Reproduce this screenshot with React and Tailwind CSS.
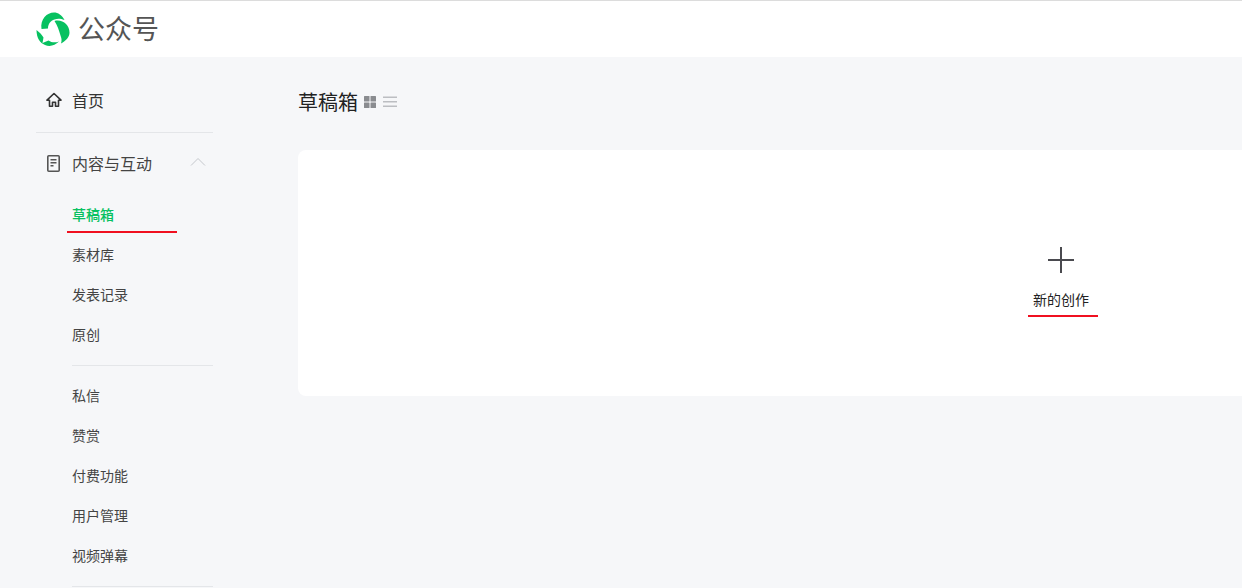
const groupOne = ["草稿箱", "素材库", "发表记录", "原创"];
const groupTwo = ["私信", "赞赏", "付费功能", "用户管理", "视频弹幕"];

function Logo() {
  return (
    <svg viewBox="0 0 34 34" className="h-[34px] w-[34px]" fill="#07c160">
      <path d="M5.500 17C4 7 11 .5 18 .5c4 0 8 2.500 10.500 7.500-4-1.500-7-1.500-10-.5-4 1.300-6.500 4.500-6.500 9z" />
      <path d="M18.500 9c8-2 15 4 15 11.500 0 4.500-3.500 8.500-8.500 11 1-3 .5-5.500-.5-8-1.500-5-3-10-6-14.500z" />
      <path d="M.5 18c0 8 3.500 13 8.500 15 5 2 10 .5 14-3.500-4 1.500-7.500 1-10.500-1l-6 2.500 1-5.500C6 23 4 20.500.5 18z" />
    </svg>
  );
}

function HomeIcon() {
  return (
    <svg viewBox="0 0 16 16" className="h-4 w-4" fill="none" stroke="#333" strokeWidth="1.6" strokeLinejoin="round">
      <path d="M8 1.500 1 8.200h2.500v6h3v-4h3v4h3v-6H15z" />
    </svg>
  );
}

function DocIcon() {
  return (
    <svg viewBox="0 0 13 17" className="h-[17px] w-[13px]" fill="none" stroke="#555" strokeWidth="1.6">
      <rect x="0.800" y="0.800" width="11.400" height="15.400" rx="1" />
      <path d="M3.500 4.800h6M3.500 7.800h6M3.500 10.800h3" />
    </svg>
  );
}

function ChevronIcon() {
  return (
    <svg viewBox="0 0 16 9" className="ml-auto mr-[7px] mb-[4px] h-[9px] w-4" fill="none" stroke="#c4c7cc" strokeWidth="1">
      <path d="M1 8.500 8 1.500l7 7" />
    </svg>
  );
}

function SubItem({ label, active }) {
  return (
    <div className={`flex h-10 items-center pb-[2px] pl-9 text-[14px] ${active ? "font-medium text-[#07c160]" : "text-[#444]"}`}>
      {label}
    </div>
  );
}

function Sidebar() {
  return (
    <aside className="ml-9 w-[177px] shrink-0 pt-[24px]">
      <div className="flex h-10 items-center pb-[2px] text-[16px] text-[#333]">
        <span className="ml-[10px] mr-[10px] flex w-4 justify-center"><HomeIcon /></span>
        首页
      </div>
      <div className="mt-[11px] border-t border-[#e4e6e9]" />
      <div className="mt-[11px] flex h-10 items-center pb-[2px] text-[16px] text-[#444]">
        <span className="ml-[10px] mr-[11px] flex w-[15px] justify-center"><DocIcon /></span>
        内容与互动
        <ChevronIcon />
      </div>
      <div className="relative mt-[11px]">
        {groupOne.map((label, i) => (
          <SubItem key={label} label={label} active={i === 0} />
        ))}
        <div className="absolute left-[31px] top-[36px] h-[2px] w-[110px] bg-[#f01020]" />
      </div>
      <div className="ml-9 mt-[10px] border-t border-[#e4e6e9]" />
      <div className="mt-[10px]">
        {groupTwo.map((label) => (
          <SubItem key={label} label={label} />
        ))}
      </div>
      <div className="ml-9 mt-[10px] border-t border-[#e4e6e9]" />
    </aside>
  );
}

export default function App() {
  return (
    <div
      className="h-[588px] w-[1242px] overflow-hidden bg-[#f6f7f9]"
      style={{ fontFamily: '"Noto Sans CJK SC", "Noto Sans", sans-serif' }}
    >
      <header className="flex h-[57px] items-center border-t border-[#dcdcdc] bg-white pl-9">
        <Logo />
        <span className="mb-[3px] ml-[8px] text-[27px] leading-none text-[#555]">公众号</span>
      </header>
      <div className="flex">
        <Sidebar />
        <main className="ml-[85px] w-[1526px] shrink-0 pt-[29px]">
          <div className="flex h-8 items-center">
            <h1 className="text-[20px] font-normal text-[#222]">草稿箱</h1>
            <svg viewBox="0 0 12 12" className="ml-[6px] h-3 w-3" fill="#8a8c90">
              <rect width="5.500" height="5.500" rx="0.500" />
              <rect x="6.500" width="5.500" height="5.500" rx="0.500" />
              <rect y="6.500" width="5.500" height="5.500" rx="0.500" />
              <rect x="6.500" y="6.500" width="5.500" height="5.500" rx="0.500" />
            </svg>
            <svg viewBox="0 0 14 12" className="ml-[7px] h-3 w-[14px]" fill="#bcbec2">
              <rect y="0.500" width="14" height="1.500" />
              <rect y="5" width="14" height="1.500" />
              <rect y="9.500" width="14" height="1.500" />
            </svg>
          </div>
          <section className="mt-[32px] flex h-[246px] flex-col items-center rounded-lg bg-white pt-[97px]">
            <svg viewBox="0 0 26 26" className="h-[26px] w-[26px]" stroke="#4a4a4f" strokeWidth="2">
              <path d="M13 0v26M0 13h26" />
            </svg>
            <div className="relative mt-[16px] text-[14px] leading-5 text-[#222]">
              新的创作
              <div className="absolute left-[-5px] top-[26px] h-[2px] w-[70px] bg-[#f01020]" />
            </div>
          </section>
        </main>
      </div>
    </div>
  );
}
